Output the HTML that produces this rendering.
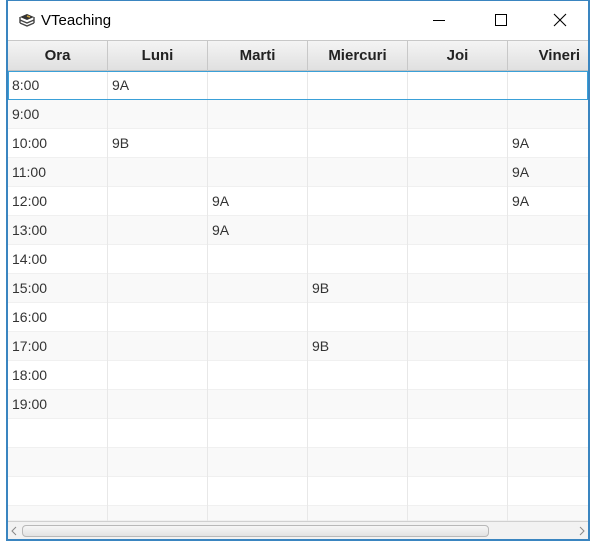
<!DOCTYPE html>
<html><head><style>
*{margin:0;padding:0;box-sizing:border-box}
body{width:596px;height:541px;background:#fff;font-family:"Liberation Sans",sans-serif;position:relative;overflow:hidden}
.win{position:absolute;left:6px;top:0;width:584px;height:541px;border:2px solid #3a85c0;border-top:1px solid #3a85c0;background:#fff}
.title{position:absolute;left:0;top:0;width:580px;height:38px;background:#fff}
.title span{position:absolute;left:33px;top:11px;font-size:15px;color:#000}
.hdr{position:absolute;left:0;top:39px;height:31px;width:580px;background:linear-gradient(#f4f4f4,#e0e0e0);border-top:1px solid #c8c8c8;border-bottom:1px solid #c0c0c0}
.hc{position:absolute;top:0;height:30px;line-height:30px;text-align:center;font-weight:bold;font-size:15px;color:#222;border-right:1px solid #c8c8c8}
.row{position:absolute;left:0;width:580px;height:29px;border-bottom:1px solid #f0f0f0}
.c{position:absolute;top:0;height:29px;line-height:28px;padding-left:4px;font-size:14px;color:#333;border-right:1px solid #e8e8e8}
.sb{position:absolute;left:0;top:520px;width:580px;height:18px;background:#f2f2f2;border-top:1px solid #d0d0d0}
.thumb{position:absolute;left:14px;top:3px;width:467px;height:12px;border:1px solid #b8b8b8;border-radius:4px;background:linear-gradient(#f6f6f6,#e2e2e2)}
</style></head><body>
<div class="win">
<div class="title">
<svg style="position:absolute;left:10px;top:11px" width="18" height="16" viewBox="0 0 18 16"><path d="M2 5 L9 2 L16 5 L9 8 Z" fill="#333"/><path d="M2 8 L9 11 L16 8 M2 11 L9 14 L16 11 M2 5 v6 M16 5 v6" stroke="#444" fill="none" stroke-width="1.4"/><path d="M9 4 L12 5" stroke="#c9a040" stroke-width="1.5"/></svg>
<span>VTeaching</span>
<div style="position:absolute;left:425px;top:19px;width:12px;height:1px;background:#000"></div>
<div style="position:absolute;left:487px;top:13px;width:12px;height:12px;border:1px solid #000"></div>
<svg style="position:absolute;left:545px;top:12px" width="14" height="14"><path d="M1 1L13 13M13 1L1 13" stroke="#000" stroke-width="1.1"/></svg>
</div>
<div class="hdr">
<div class="hc" style="left:0;width:100px">Ora</div>
<div class="hc" style="left:100px;width:100px">Luni</div>
<div class="hc" style="left:200px;width:100px">Marti</div>
<div class="hc" style="left:300px;width:100px">Miercuri</div>
<div class="hc" style="left:400px;width:100px">Joi</div>
<div class="hc" style="left:500px;width:80px;text-align:right;padding-right:8px;border-right:none">Vineri</div>
</div>
<div id="rows"></div>
<div style="position:absolute;left:0;top:70px;width:580px;height:29px;border:1px solid #3aa0d8;z-index:2"></div>
<div class="sb"><div class="thumb"></div>
<svg style="position:absolute;left:3px;top:4px" width="6" height="10"><path d="M5 1L1 5L5 9" stroke="#888" fill="none"/></svg>
<svg style="position:absolute;left:571px;top:4px" width="6" height="10"><path d="M1 1L5 5L1 9" stroke="#888" fill="none"/></svg>
</div>
</div>
<script>
var d=[["8:00","9A","","","",""],["9:00","","","","",""],["10:00","9B","","","","9A"],["11:00","","","","","9A"],["12:00","","9A","","","9A"],["13:00","","9A","","",""],["14:00","","","","",""],["15:00","","","9B","",""],["16:00","","","","",""],["17:00","","","9B","",""],["18:00","","","","",""],["19:00","","","","",""],["","","","","",""],["","","","","",""],["","","","","",""],["","","","","",""]];
var h="";d.forEach(function(r,i){var top=70+i*29;if(top>=520)return;var hh=Math.min(29,520-top);
h+='<div class="row" style="top:'+top+'px;height:'+hh+'px;background:'+(i%2?'#f9f9f9':'#fff')+'">';
r.forEach(function(v,j){h+='<div class="c" style="left:'+(j*100)+'px;width:'+(j==5?80:100)+'px;height:'+hh+'px'+(j==5?';border-right:none':'')+'">'+v+'</div>'});h+='</div>'});
document.getElementById('rows').innerHTML=h;
</script>
</body></html>
